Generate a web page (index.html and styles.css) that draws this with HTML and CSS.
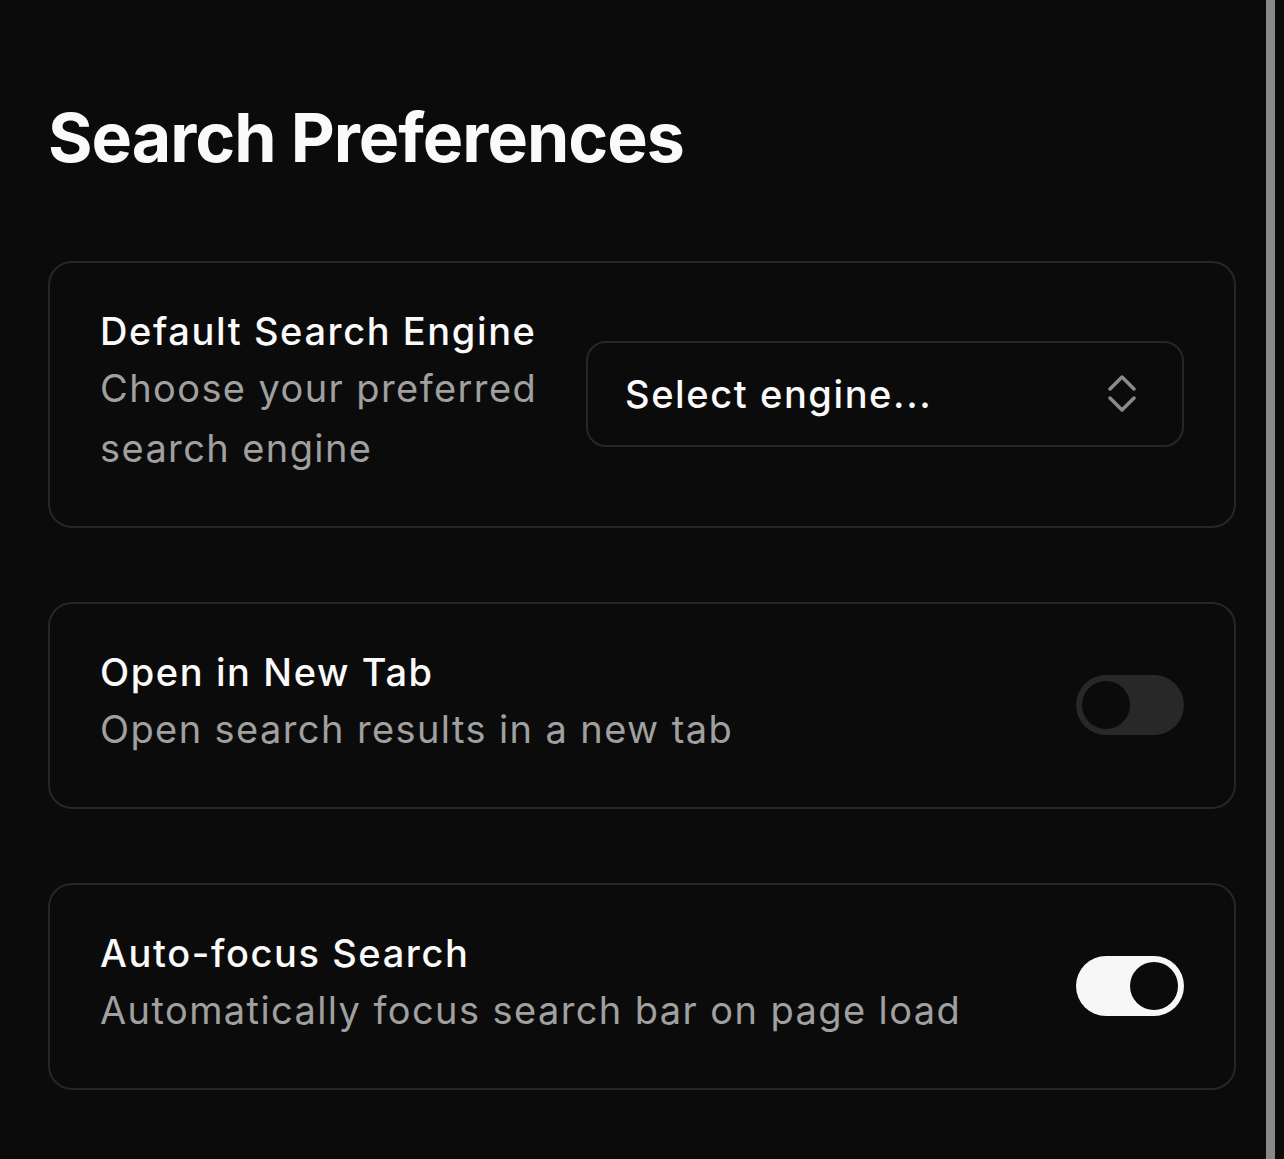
FILE: index.html
```html
<!DOCTYPE html>
<html lang="en">
<head>
  <meta charset="UTF-8" />
  <meta name="viewport" content="width=device-width, initial-scale=1" />
  <title>Search Preferences</title>
  <link rel="stylesheet" href="styles.css">
</head>
<body>
  <main class="settings">
    <h1 class="settings-title">Search Preferences</h1>

    <section class="setting-card">
      <div class="setting-text">
        <div class="setting-label">Default Search Engine</div>
        <div class="setting-desc">Choose your preferred search engine</div>
      </div>
      <button class="select-box" type="button">
        <span>Select engine...</span>
        <svg class="select-icon" width="28" height="40" viewBox="0 0 28 40" fill="none" stroke="currentColor" stroke-width="3.5" stroke-linecap="round" stroke-linejoin="round">
          <path d="M2 15 L14 3 L26 15" />
          <path d="M2 24 L14 36 L26 24" />
        </svg>
      </button>
    </section>

    <section class="setting-card">
      <div class="setting-text">
        <div class="setting-label">Open in New Tab</div>
        <div class="setting-desc">Open search results in a new tab</div>
      </div>
      <span class="toggle" role="switch" aria-checked="false"><span class="knob"></span></span>
    </section>

    <section class="setting-card">
      <div class="setting-text">
        <div class="setting-label">Auto-focus Search</div>
        <div class="setting-desc">Automatically focus search bar on page load</div>
      </div>
      <span class="toggle on" role="switch" aria-checked="true"><span class="knob"></span></span>
    </section>
  </main>

  <div class="scroll-strip"></div>
</body>
</html>
```

FILE: styles.css
```css
body {
  margin: 0;
  height: 100vh;
  display: flex;
  background: #0b0b0b;
  color: #fafafa;
  font-family: Inter, 'Noto Sans', sans-serif;
  overflow: hidden;
}
.settings {
  flex: 1;
  padding: 97px 30px 0 48px;
}
.settings-title {
  margin: 0 0 82px;
  font-size: 68px;
  line-height: 1.2;
  font-weight: 700;
  letter-spacing: -1px;
}
.setting-card {
  display: flex;
  align-items: center;
  gap: 40px;
  border: 2px solid #272727;
  border-radius: 24px;
  padding: 47px 50px 48px;
  margin-bottom: 74px;
}
.setting-text {
  flex: 1;
}
.setting-label {
  font-size: 38px;
  line-height: 42px;
  font-weight: 500;
  letter-spacing: 1.6px;
  margin-bottom: 6px;
}
.setting-desc {
  font-size: 38px;
  line-height: 60px;
  color: #a0a0a0;
  letter-spacing: 1.4px;
}
.select-box {
  flex: 0 0 598px;
  box-sizing: border-box;
  height: 106px;
  display: flex;
  align-items: center;
  justify-content: space-between;
  padding: 0 46px 0 37px;
  background: transparent;
  border: 2px solid #272727;
  border-radius: 20px;
  color: #fafafa;
  font-family: inherit;
  font-size: 38px;
  font-weight: 500;
  letter-spacing: 1.6px;
}
.select-icon {
  color: #8a8a8a;
}
.toggle {
  flex: 0 0 108px;
  height: 60px;
  border-radius: 30px;
  background: #282828;
  display: flex;
  align-items: center;
  padding: 0 6px;
  box-sizing: border-box;
}
.knob {
  width: 48px;
  height: 48px;
  border-radius: 50%;
  background: #0b0b0b;
}
.toggle.on {
  background: #f7f7f7;
  justify-content: flex-end;
}
/* scrollbar-like strip on the right edge */
.scroll-strip {
  width: 9px;
  margin-right: 9px;
  background: #888;
}
```
